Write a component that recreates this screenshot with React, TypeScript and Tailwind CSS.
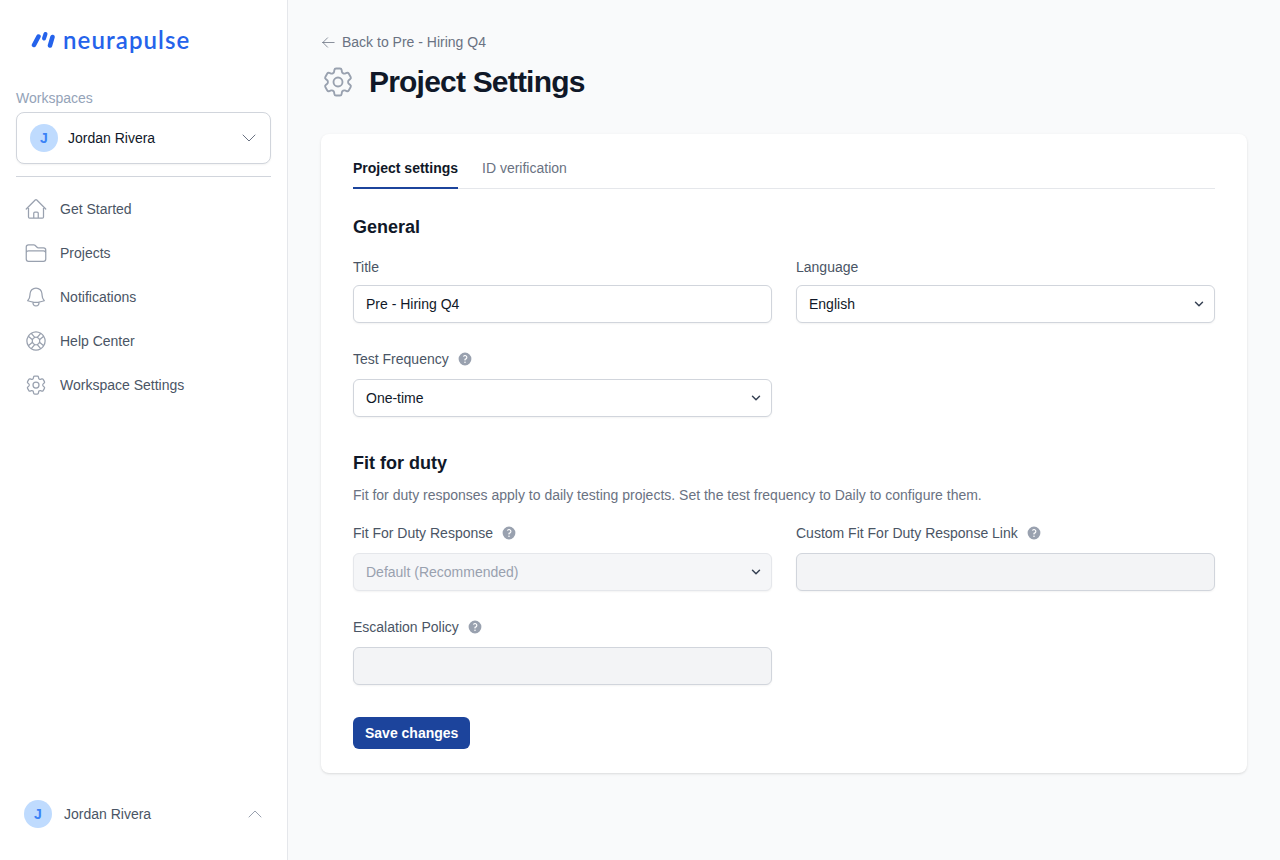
import { ChevronDown, ChevronUp } from "lucide-react"
import {
  HiOutlineHome,
  HiOutlineFolder,
  HiOutlineBell,
  HiOutlineLifebuoy,
  HiOutlineCog6Tooth,
  HiOutlineArrowLeft,
  HiMiniQuestionMarkCircle,
} from "react-icons/hi2"
import React from "react"

const navItems = [
  { label: "Get Started", icon: HiOutlineHome },
  { label: "Projects", icon: HiOutlineFolder },
  { label: "Notifications", icon: HiOutlineBell },
  { label: "Help Center", icon: HiOutlineLifebuoy },
  { label: "Workspace Settings", icon: HiOutlineCog6Tooth },
]

function Avatar() {
  return (
    <div className="flex h-7 w-7 shrink-0 items-center justify-center rounded-full bg-[#bfdbfe] text-sm font-semibold text-[#3b82f6]">
      J
    </div>
  )
}

function Logo() {
  return (
    <div className="flex h-6 items-center gap-2 pl-[15px]">
      <svg width="24" height="18" viewBox="0 0 24 18" fill="none">
        <path d="M3 14 L7.5 5.5" stroke="#2563eb" strokeWidth="4.5" strokeLinecap="round" />
        <path d="M13 7.5 L14.5 3" stroke="#2563eb" strokeWidth="4" strokeLinecap="round" />
        <path d="M19 14.5 L21.5 6" stroke="#2563eb" strokeWidth="4.5" strokeLinecap="round" />
      </svg>
      <span className="font-['Lato',sans-serif] text-[24px] leading-6 font-semibold tracking-[1.1px] text-[#2563eb]">
        neurapulse
      </span>
    </div>
  )
}

function Sidebar() {
  return (
    <aside className="flex h-[860px] w-[288px] shrink-0 flex-col border-r border-gray-200 bg-white px-4 pt-7">
      <Logo />
      <div className="mt-9 text-sm leading-5 text-[#94a3b8]">Workspaces</div>
      <div className="mt-1 flex h-[52px] items-center rounded-lg border border-gray-300 bg-white pr-[9px] pl-[13px] shadow-xs">
        <Avatar />
        <span className="ml-[10px] flex-1 text-sm text-gray-900">Jordan Rivera</span>
        <ChevronDown className="h-6 w-6 text-gray-500" strokeWidth={1} />
      </div>
      <div className="mt-3 border-t border-gray-300" />
      <nav className="mt-[10px] flex flex-col">
        {navItems.map((item) => (
          <div key={item.label} className="flex h-11 items-center gap-3 pl-2 text-sm text-gray-600">
            <item.icon className="h-6 w-6 text-gray-400" strokeWidth={1.25} />
            <span>{item.label}</span>
          </div>
        ))}
      </nav>
      <div className="mt-auto mb-8 flex items-center pr-1 pl-2">
        <Avatar />
        <span className="ml-3 flex-1 text-sm text-gray-600">Jordan Rivera</span>
        <ChevronUp className="h-6 w-6 text-gray-400" strokeWidth={1} />
      </div>
    </aside>
  )
}

function Help() {
  return <HiMiniQuestionMarkCircle className="h-4 w-4 text-gray-400" />
}

function Label({ text, help }: { text: string; help?: boolean }) {
  return (
    <label className="flex h-5 items-center gap-2 text-sm text-gray-600">
      <span>{text}</span>
      {help && <Help />}
    </label>
  )
}

function Select({ value, disabled }: { value: string; disabled?: boolean }) {
  return (
    <div className="relative">
      <select
        disabled={disabled}
        defaultValue={value}
        className={
          disabled
            ? "block h-[38px] w-full appearance-none rounded-md border border-gray-200 bg-[#f5f6f8] px-3 text-sm text-gray-400 shadow-xs"
            : "block h-[38px] w-full appearance-none rounded-md border border-gray-300 bg-white px-3 text-sm text-gray-900 shadow-xs"
        }
      >
        <option>{value}</option>
      </select>
      <ChevronDown className="pointer-events-none absolute top-3 right-[9px] h-[14px] w-[14px] text-gray-700" strokeWidth={2.5} />
    </div>
  )
}

function Input({ value, disabled }: { value?: string; disabled?: boolean }) {
  return (
    <input
      disabled={disabled}
      defaultValue={value}
      className={
        disabled
          ? "block h-[38px] w-full rounded-md border border-gray-300 bg-gray-100 px-3 text-sm shadow-xs"
          : "block h-[38px] w-full rounded-md border border-gray-300 bg-white px-3 text-sm text-gray-900 shadow-xs"
      }
    />
  )
}

function Settings() {
  return (
    <div className="mt-[34px] rounded-lg bg-white px-8 pt-6 pb-6 shadow-sm">
      <div className="flex gap-6 border-b border-gray-200 text-sm">
        <div className="-mb-px border-b-2 border-[#1c449c] pb-[9px] leading-5 font-semibold text-gray-900">
          Project settings
        </div>
        <div className="pb-[9px] leading-5 text-gray-500">ID verification</div>
      </div>

      <h2 className="mt-6 text-lg leading-7 font-semibold text-gray-900">General</h2>
      <div className="mt-4 grid grid-cols-2 gap-x-6">
        <div>
          <Label text="Title" />
          <div className="mt-2">
            <Input value="Pre - Hiring Q4" />
          </div>
        </div>
        <div>
          <Label text="Language" />
          <div className="mt-2">
            <Select value="English" />
          </div>
        </div>
      </div>
      <div className="mt-[26px] grid grid-cols-2 gap-x-6">
        <div>
          <Label text="Test Frequency" help />
          <div className="mt-2.5">
            <Select value="One-time" />
          </div>
        </div>
      </div>

      <h2 className="mt-8 text-lg leading-7 font-semibold text-gray-900">Fit for duty</h2>
      <p className="mt-2 text-sm leading-5 text-gray-500">
        Fit for duty responses apply to daily testing projects. Set the test frequency to Daily to configure them.
      </p>
      <div className="mt-[18px] grid grid-cols-2 gap-x-6">
        <div>
          <Label text="Fit For Duty Response" help />
          <div className="mt-2.5">
            <Select value="Default (Recommended)" disabled />
          </div>
        </div>
        <div>
          <Label text="Custom Fit For Duty Response Link" help />
          <div className="mt-2.5">
            <Input disabled />
          </div>
        </div>
      </div>
      <div className="mt-[26px] grid grid-cols-2 gap-x-6">
        <div>
          <Label text="Escalation Policy" help />
          <div className="mt-2.5">
            <Input disabled />
          </div>
        </div>
      </div>

      <button className="mt-8 h-8 rounded-md bg-[#1c449c] px-3 text-sm font-semibold text-white">
        Save changes
      </button>
    </div>
  )
}

export default function App() {
  return (
    <div className="flex h-[860px] overflow-hidden bg-[#f9fafb] font-['Liberation_Sans',sans-serif]">
      <Sidebar />
      <main className="flex-1 pt-8 pr-[33px] pl-[33px]">
        <div className="flex h-5 items-center gap-[6px] text-sm text-gray-500">
          <HiOutlineArrowLeft className="h-[15px] w-[15px]" strokeWidth={1.25} />
          <span>Back to Pre - Hiring Q4</span>
        </div>
        <div className="mt-3 flex h-9 items-center">
          <HiOutlineCog6Tooth className="-ml-px h-9 w-9 text-gray-400" strokeWidth={1.25} />
          <h1 className="ml-[13px] text-[30px] leading-9 font-bold tracking-[-0.8px] text-gray-900">Project Settings</h1>
        </div>
        <Settings />
      </main>
    </div>
  )
}
